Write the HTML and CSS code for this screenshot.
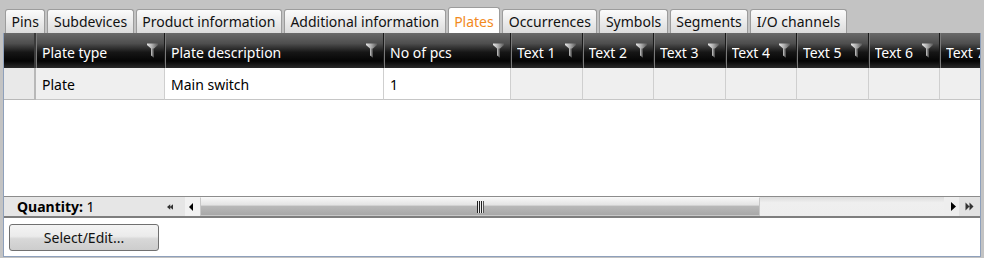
FILE: index.html
```html
<!DOCTYPE html>
<html>
<head>
<meta charset="utf-8">
<link rel="stylesheet" href="styles.css">
</head>
<body>
<svg width="0" height="0" class="defs">
  <defs>
    <linearGradient id="fg" x1="0" y1="0" x2="1" y2="0">
      <stop offset="0" stop-color="#e8e8e8"/>
      <stop offset="0.45" stop-color="#b0b0b0"/>
      <stop offset="1" stop-color="#5a5a5a"/>
    </linearGradient>
    <symbol id="funnel" viewBox="0 0 11 15">
      <path d="M0 0.5 H11 V2 L7 5.5 V14.5 L4 12.5 V5.5 L0 2 Z" fill="url(#fg)"/>
      <path d="M7 5.5 V14.5 L5.5 13.5 V5.5 Z" fill="#2a2a2a" opacity="0.6"/>
    </symbol>
  </defs>
</svg>
<div class="tabs">
  <div class="tab">Pins</div>
  <div class="tab">Subdevices</div>
  <div class="tab">Product information</div>
  <div class="tab">Additional information</div>
  <div class="tab active">Plates</div>
  <div class="tab">Occurrences</div>
  <div class="tab">Symbols</div>
  <div class="tab">Segments</div>
  <div class="tab">I/O channels</div>
</div>
<div class="panel">
  <div class="grid">
    <div class="hrow">
      <div class="hc rh"></div>
      <div class="hc c1"><span>Plate type</span><svg class="fi"><use href="#funnel"/></svg></div>
      <div class="hc c2"><span>Plate description</span><svg class="fi"><use href="#funnel"/></svg></div>
      <div class="hc c3"><span>No of pcs</span><svg class="fi"><use href="#funnel"/></svg></div>
      <div class="hc ct"><span>Text 1</span><svg class="fi"><use href="#funnel"/></svg></div>
      <div class="hc ct"><span>Text 2</span><svg class="fi"><use href="#funnel"/></svg></div>
      <div class="hc ct"><span>Text 3</span><svg class="fi"><use href="#funnel"/></svg></div>
      <div class="hc ct"><span>Text 4</span><svg class="fi"><use href="#funnel"/></svg></div>
      <div class="hc ct"><span>Text 5</span><svg class="fi"><use href="#funnel"/></svg></div>
      <div class="hc ct"><span>Text 6</span><svg class="fi"><use href="#funnel"/></svg></div>
      <div class="hc ct"><span>Text 7</span><svg class="fi"><use href="#funnel"/></svg></div>
    </div>
    <div class="drow">
      <div class="dc rh"></div>
      <div class="dc c1 ro">Plate</div>
      <div class="dc c2">Main switch</div>
      <div class="dc c3">1</div>
      <div class="dc ct ro"></div>
      <div class="dc ct ro"></div>
      <div class="dc ct ro"></div>
      <div class="dc ct ro"></div>
      <div class="dc ct ro"></div>
      <div class="dc ct ro"></div>
      <div class="dc ct ro"></div>
    </div>
    <div class="empty"></div>
    <div class="footer">
      <div class="qty"><b>Quantity:</b> 1</div>
      <div class="sb-left">
        <svg class="dbl" width="8" height="8" viewBox="0 0 8 8"><path d="M0 4 L4 0.5 V7.5 Z M3.5 4 L7.5 0.5 V7.5 Z" fill="#333"/></svg>
        <div class="sb-btn"><svg width="4" height="8" viewBox="0 0 4 8"><path d="M0 4 L4 0 V8 Z" fill="#000"/></svg></div>
      </div>
      <div class="track">
        <div class="thumb"><span class="grip"></span></div>
        <div class="rest"></div>
      </div>
      <div class="sb-right">
        <div class="sb-btn r"><svg width="5" height="9" viewBox="0 0 5 9"><path d="M0 0 L5 4.5 L0 9 Z" fill="#000"/></svg></div>
        <div class="dblbox"><svg width="9" height="9" viewBox="0 0 9 9"><path d="M0.5 0.5 L4.5 4.5 L0.5 8.5 Z M4.5 0.5 L8.5 4.5 L4.5 8.5 Z" fill="#333"/></svg></div>
      </div>
    </div>
  </div>
  <div class="actions">
    <button class="btn">Select/Edit...</button>
  </div>
</div>
</body>
</html>
```
FILE: styles.css
```css
html, body {
  margin: 0;
  padding: 0;
}
body {
  width: 984px;
  height: 258px;
  background: #c3c3c3;
  font-family: "Noto Sans", "Open Sans", sans-serif;
  font-size: 14px;
  color: #000;
  overflow: hidden;
}
.defs {
  position: absolute;
}
.tabs {
  display: flex;
  align-items: flex-end;
  height: 33px;
  padding-left: 5px;
  box-sizing: border-box;
}
.tab {
  height: 24px;
  box-sizing: border-box;
  border: 1px solid #9c9c9c;
  border-bottom: none;
  border-radius: 3px 3px 0 0;
  background: linear-gradient(#fbfbfb, #ececec 50%, #dcdcdc);
  padding: 0 5.5px;
  margin-right: 2px;
  line-height: 24px;
  color: #111;
  white-space: nowrap;
}
.tab.active {
  height: 26px;
  background: #fff;
  color: #f28a1e;
  line-height: 27px;
}
.panel {
  margin: 0 3px 0 3px;
  width: 978px;
  height: 224px;
  box-sizing: border-box;
  border: 1px solid #8ea0bb;
  border-top: none;
  background: #fff;
  display: flex;
  flex-direction: column;
}
.grid {
  display: flex;
  flex-direction: column;
  overflow: hidden;
}
.hrow, .drow {
  display: flex;
  width: 1100px;
}
.hrow {
  height: 35px;
  background: linear-gradient(#6a6a6a, #4e4e4e 30%, #161616 55%, #050505 80%, #2a2a2a);
}
.hc {
  box-sizing: border-box;
  border-right: 1px solid #1a1a1a;
  box-shadow: inset 1px 0 0 #7a7a7a;
  display: flex;
  align-items: center;
  justify-content: space-between;
  padding: 0 6px;
  color: #fff;
  font-size: 14px;
  flex: none;
}
.hc span {
  white-space: nowrap;
  overflow: hidden;
  padding-top: 4px;
}
.fi {
  width: 11px;
  height: 15px;
  flex: none;
}
.rh { width: 32px; }
.c1 { width: 129px; }
.c2 { width: 219px; }
.c3 { width: 127px; }
.ct { width: 71.5px; }
.hc.rh {
  box-shadow: none;
  border-right: 2px solid #3a3a3a;
}
.drow {
  height: 32px;
}
.dc {
  box-sizing: border-box;
  flex: none;
  border-right: 1px solid #cfcfcf;
  border-bottom: 1px solid #c6c6c6;
  padding: 1px 6px 0;
  line-height: 31px;
  background: #fff;
  white-space: nowrap;
}
.dc.ro {
  background: #efefef;
}
.dc.rh {
  background: #e9e9e9;
  border-right: 2px solid #b8b8b8;
  border-bottom: 1px solid #b8b8b8;
}
.empty {
  height: 96px;
}
.footer {
  display: flex;
  height: 22px;
  box-sizing: border-box;
  border-top: 1px solid #8c8c8c;
  border-bottom: 2px solid #7e7e7e;
  background: #e6e6e6;
}
.qty {
  width: 156px;
  padding-left: 13px;
  box-sizing: border-box;
  font-size: 14px;
  line-height: 20px;
}
.sb-left {
  display: flex;
  align-items: center;
  width: 40px;
}
.dbl {
  margin-left: 7px;
}
.sb-btn {
  margin-left: 12px;
  width: 17px;
  height: 19px;
  background: #f2f2f2;
  display: flex;
  align-items: center;
  padding-left: 4px;
  box-sizing: border-box;
}
.track {
  display: flex;
  width: 744px;
}
.thumb {
  width: 560px;
  box-sizing: border-box;
  border: 1px solid #c8c8c8;
  border-top-color: #f8f8f8;
  background: linear-gradient(#f6f6f6, #e4e4e4 40%, #b8b8b8 50%, #a8a8a8);
  display: flex;
  align-items: center;
  padding-left: 276px;
}
.grip {
  width: 7px;
  height: 12px;
  background: linear-gradient(90deg, #222 0 1px, #eee 1px 2px, #222 2px 3px, #eee 3px 4px, #222 4px 5px, #eee 5px 6px, #555 6px 7px);
}
.rest {
  flex: 1;
  background: linear-gradient(#dcdcdc, #efefef 30%, #eeeeee);
}
.sb-right {
  display: flex;
  align-items: center;
  flex: 1;
  background: #eeeeee;
}
.sb-btn.r {
  margin-left: 3px;
  background: #eeeeee;
  width: 12px;
}
.dblbox {
  width: 21px;
  height: 19px;
  background: #e2e2e2;
  display: flex;
  align-items: center;
  justify-content: center;
}
.actions {
  flex: 1;
  padding: 6px 0 0 5px;
}
.btn {
  width: 150px;
  height: 27px;
  border: 1px solid #707070;
  border-radius: 3px;
  background: linear-gradient(#f4f4f4, #ebebeb 45%, #d8d8d8 55%, #cdcdcd);
  font-family: "Noto Sans", "Open Sans", sans-serif;
  font-size: 14px;
  color: #111;
  padding: 0;
}
```
